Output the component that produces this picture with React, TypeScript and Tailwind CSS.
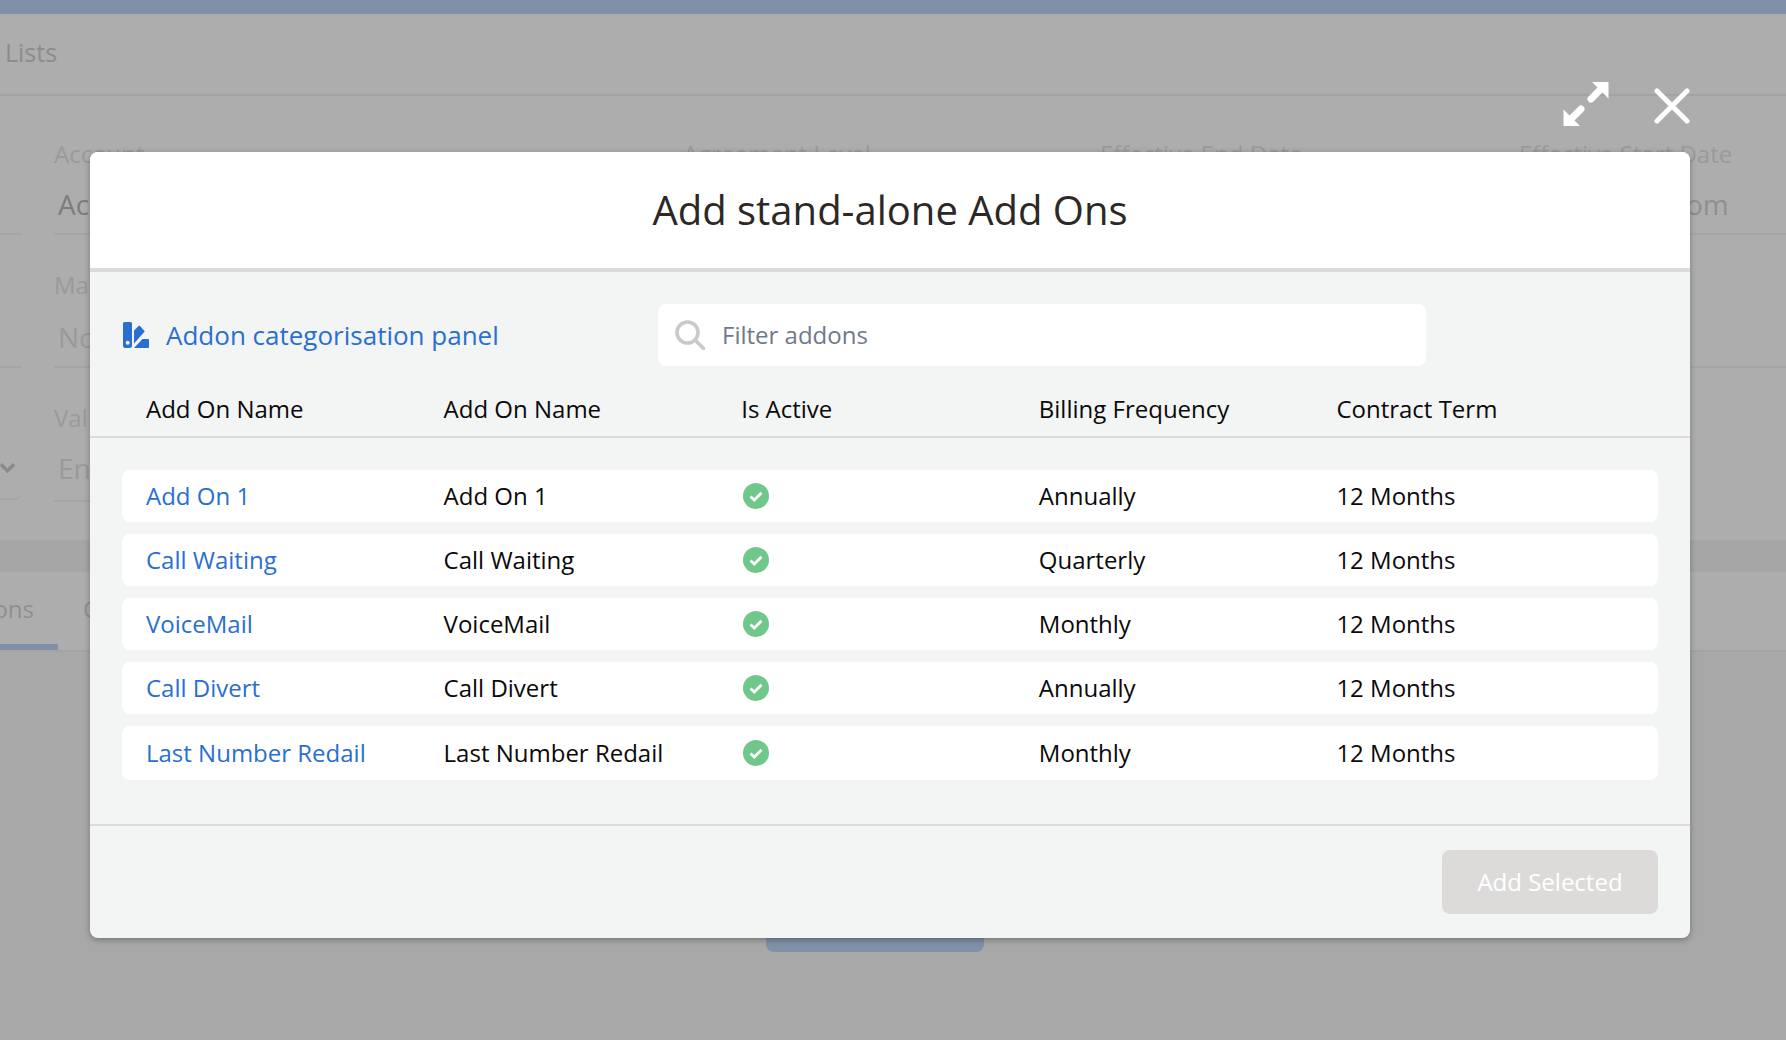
const font = "font-['Open_Sans','Noto_Sans',sans-serif]";

const addons = [
  { name: "Add On 1", billing: "Annually" },
  { name: "Call Waiting", billing: "Quarterly" },
  { name: "VoiceMail", billing: "Monthly" },
  { name: "Call Divert", billing: "Annually" },
  { name: "Last Number Redail", billing: "Monthly" },
];

function PaletteIcon() {
  return (
    <svg width="26" height="26" viewBox="0 0 26 26" className="shrink-0" fill="#2a6fd0">
      <path
        fillRule="evenodd"
        d="M1.500 0h6A1.500 1.500 0 0 1 9 1.500v22A2.500 2.500 0 0 1 6.500 26h-4A2.500 2.500 0 0 1 0 23.500v-22A1.500 1.500 0 0 1 1.500 0zM4.700 18.700a2 2 0 1 0 0 4 2 2 0 0 0 0-4z"
      />
      <path d="M11 8.500 15.600 3.900a1 1 0 0 1 1.400 0l4.300 4.800a1 1 0 0 1 0 1.400L11 21.500z" />
      <path d="M19.500 17H25a1 1 0 0 1 1 1v7a1 1 0 0 1-1 1H11z" />
    </svg>
  );
}

function CheckIcon() {
  return (
    <svg width="26" height="26" viewBox="0 0 26 26">
      <circle cx="13" cy="13" r="13" fill="#6fc78a" />
      <path d="M7.500 13.500l3.800 3.600 7.200-7.400" fill="none" stroke="#fff" strokeWidth="2.800" />
    </svg>
  );
}

function SearchIcon() {
  return (
    <svg width="30" height="30" viewBox="0 0 30 30" fill="none" stroke="#c9c9c9" strokeWidth="3.600" className="shrink-0">
      <circle cx="12.500" cy="12.500" r="10.500" />
      <path d="M20 20l8.500 8.500" strokeLinecap="round" />
    </svg>
  );
}

function BackgroundPage() {
  return (
    <div className="flex h-[1040px] w-[1786px] flex-col overflow-hidden bg-[#a8a8a8]">
      <div className="h-[14px] shrink-0 bg-[#8091a7] shadow-[0_2px_6px_rgba(0,0,0,0.25)]" />
      <div className="flex h-[82px] shrink-0 items-center border-b-2 border-[#a3a3a3] bg-[#adadad] pb-[2px] pl-[5px] text-[25px] text-[#8c8c8c]">
        Lists
      </div>

      <div className="grid h-[444px] shrink-0 grid-cols-[54px_629px_417px_419px_1fr] grid-rows-[139px_133px_132px] bg-[#adadad] text-[#9a9a9a]">
        <div className="mr-8 border-b-2 border-[#a5a5a5]" />
        <div className="flex flex-col border-b-2 border-[#a5a5a5] pt-[42px] text-2xl">
          <span>Account</span>
          <span className="mt-4 pl-1 text-[28px] text-[#7d7d7d]">Ac</span>
        </div>
        <div className="pt-[42px] text-2xl">Agreement Level</div>
        <div className="pt-[42px] text-2xl">Effective End Date</div>
        <div className="flex flex-col border-b-2 border-[#a5a5a5] pt-[42px] text-2xl">
          <span>Effective Start Date</span>
          <span className="mt-4 pl-[167px] text-[28px] leading-9 text-[#8f8f8f]">om</span>
        </div>

        <div className="mr-8 border-b-2 border-[#a5a5a5]" />
        <div className="flex flex-col border-b-2 border-[#a5a5a5] pt-[34px] text-2xl">
          <span>Ma</span>
          <span className="mt-[18px] pl-1 text-[28px] text-[#9a9a9a]">No</span>
        </div>
        <div />
        <div />
        <div className="border-b-2 border-[#a5a5a5]" />

        <div className="mr-8 flex items-end justify-end rounded-br-lg border-b-2 border-[#a5a5a5] pb-[24px] pr-[7px]">
          <svg width="16" height="12" viewBox="0 0 16 12" fill="none" stroke="#8a8a8a" strokeWidth="3.500">
            <path d="M1 2l7 7 7-7" />
          </svg>
        </div>
        <div className="flex flex-col pt-[34px] text-2xl">
          <span>Val</span>
          <span className="mt-[16px] border-b-2 border-[#a5a5a5] pb-[13px] pl-1 text-[28px] text-[#9a9a9a]">En</span>
        </div>
      </div>

      <div className="h-[32px] shrink-0 bg-[#a6a6a6]" />

      <div className="flex h-[80px] shrink-0 gap-[25px] border-b-2 border-[#a3a3a3] bg-[#adadad] text-2xl text-[#8f8f8f]">
        <div className="flex w-[58px] justify-end border-b-[6px] border-[#8091a7] pr-[24px] pt-[21px]">ons</div>
        <div className="pt-[21px]">C</div>
      </div>

      <div className="ml-[766px] mt-[248px] h-[52px] w-[218px] shrink-0 rounded-b-lg bg-[#8091a7]" />
    </div>
  );
}

export default function App() {
  return (
    <div className={`${font} relative h-[1040px] w-[1786px] overflow-hidden`}>
      <BackgroundPage />

      {/* modal controls */}
      <div className="absolute left-[1563px] top-[81px] flex items-start gap-[45px]">
        <svg width="46" height="46" viewBox="0 0 46 46" fill="#fff" stroke="#fff">
          <path d="M29 1H45.500V17.500z" strokeWidth="0" />
          <path d="M37 9 28 18" strokeWidth="7" strokeLinecap="round" fill="none" />
          <path d="M.500 28.500V45H17z" strokeWidth="0" />
          <path d="M9 37 18 28" strokeWidth="7" strokeLinecap="round" fill="none" />
        </svg>
        <svg width="36" height="36" viewBox="0 0 36 36" fill="none" stroke="#fff" strokeWidth="5" strokeLinecap="round" className="mt-[7px]">
          <path d="M3 3l30 30M33 3L3 33" />
        </svg>
      </div>

      <div className="absolute left-[90px] top-[152px] flex h-[786px] w-[1600px] flex-col overflow-hidden rounded-lg bg-[#f3f4f4] shadow-[0_2px_6px_rgba(0,0,0,0.3)]">
        <div className="flex h-[120px] shrink-0 items-center justify-center border-b-4 border-[#dddbda] bg-white text-[40px] text-[#2b2826]">
          Add stand-alone Add Ons
        </div>

        <div className="flex h-[110px] shrink-0 items-start gap-[210px] pl-[33px] pt-8">
          <div className="flex h-[62px] w-[325px] items-center gap-[17px] whitespace-nowrap text-[26px] text-[#2a6fd0]">
            <PaletteIcon />
            Addon categorisation panel
          </div>
          <div className="flex h-[62px] w-[768px] items-center gap-[17px] rounded-lg bg-white pl-[17px] text-2xl text-[#70798a]">
            <SearchIcon />
            Filter addons
          </div>
        </div>

        <div className="grid h-[56px] shrink-0 grid-cols-5 items-center border-b-2 border-[#dddbda] px-14 text-2xl text-[#0a0a0a]">
          <div>Add On Name</div>
          <div>Add On Name</div>
          <div>Is Active</div>
          <div>Billing Frequency</div>
          <div>Contract Term</div>
        </div>

        <div className="flex flex-col gap-3 px-8 pt-8">
          {addons.map((a) => (
            <div key={a.name} className="grid h-[52px] grid-cols-5 items-center rounded-lg bg-white px-6 text-2xl text-[#0a0a0a] last:h-[54px]">
              <div className="text-[#2a6fd0]">{a.name}</div>
              <div>{a.name}</div>
              <div className="flex pl-[2px]">
                <CheckIcon />
              </div>
              <div>{a.billing}</div>
              <div>12 Months</div>
            </div>
          ))}
        </div>

        <div className="mt-[44px] flex flex-1 items-center justify-end border-t-2 border-[#dddbda] pr-8">
          <button className="h-[64px] w-[216px] rounded-lg bg-[#dddbda] text-2xl text-white">Add Selected</button>
        </div>
      </div>
    </div>
  );
}
